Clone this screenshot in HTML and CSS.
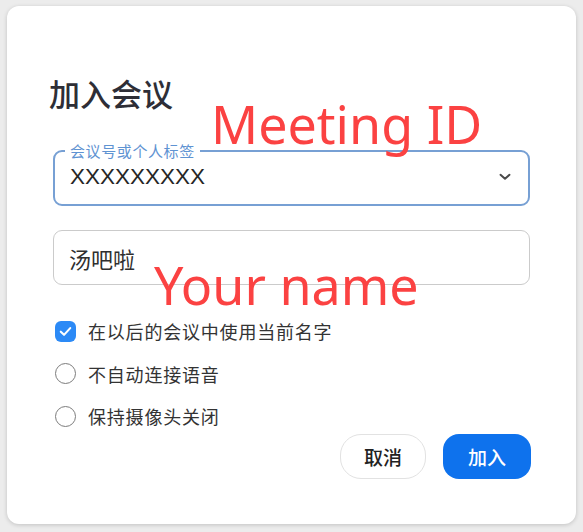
FILE: index.html
```html
<!DOCTYPE html>
<html lang="zh-CN">
<head>
<meta charset="utf-8">
<title>加入会议</title>
<link rel="stylesheet" href="styles.css">
</head>
<body>
<div class="card">
  <h1 class="title">加入会议</h1>
  <fieldset class="field field-id">
    <legend class="legend">会议号或个人标签</legend>
    <div class="field-row">
      <span class="id-value">XXXXXXXXX</span>
      <svg class="chevron" width="12" height="8" viewBox="0 0 12 8"><path d="M1.5 1.8 L6 5.8 L10.5 1.8" fill="none" stroke="#4a4a4a" stroke-width="2" stroke-linecap="round" stroke-linejoin="round"/></svg>
    </div>
  </fieldset>
  <div class="field field-name">
    <span class="name-value">汤吧啦</span>
  </div>
  <div class="options">
    <div class="option">
      <span class="box checked">
        <svg width="21" height="21" viewBox="0 0 20 20"><path d="M5.5 10.2 L8.6 13.2 L14.5 6.8" fill="none" stroke="#fff" stroke-width="2" stroke-linecap="round" stroke-linejoin="round"/></svg>
      </span>
      <span class="label">在以后的会议中使用当前名字</span>
    </div>
    <div class="option">
      <span class="box"></span>
      <span class="label">不自动连接语音</span>
    </div>
    <div class="option">
      <span class="box"></span>
      <span class="label">保持摄像头关闭</span>
    </div>
  </div>
  <div class="actions">
    <button class="btn btn-cancel">取消</button>
    <button class="btn btn-join">加入</button>
  </div>
  <span class="note note-id">Meeting ID</span>
  <span class="note note-name">Your name</span>
</div>
</body>
</html>
```
FILE: styles.css
```css
html, body {
  margin: 0;
  padding: 0;
}
body {
  background: #ececec;
  width: 583px;
  height: 532px;
  overflow: hidden;
  font-family: "Noto Sans CJK SC", "Liberation Sans", sans-serif;
}
.card {
  position: relative;
  margin: 6px 0 0 7px;
  width: 569px;
  height: 518px;
  box-sizing: border-box;
  padding: 69px 46px 0 46px;
  background: #fff;
  border-radius: 12px;
  box-shadow: 0 1px 4px rgba(0,0,0,0.18);
  display: flex;
  flex-direction: column;
}
.title {
  margin: 0;
  font-size: 31px;
  line-height: 36px;
  font-weight: 500;
  color: #2e2e36;
  margin-left: -4px;
}
.field {
  box-sizing: border-box;
  margin: 0;
  min-width: 0;
}
.field-id {
  margin-top: 32px;
  border: 2px solid #77a0d4;
  border-radius: 9px;
  padding: 0 17px 0 15px;
  height: 63px;
}
.legend {
  margin-left: -5px;
  padding: 0 5px;
  font-size: 15px;
  line-height: 16px;
  letter-spacing: 0.6px;
  color: #5f93d2;
}
.field-row {
  display: flex;
  align-items: center;
  justify-content: space-between;
  padding-top: 5px;
  height: 26px;
}
.id-value {
  font-family: "Liberation Sans", sans-serif;
  font-size: 22.5px;
  line-height: 26px;
  color: #262626;
}
.chevron {
  display: block;
}
.field-name {
  margin-top: 24px;
  height: 55px;
  border: 1.5px solid #cbcbcb;
  border-radius: 9px;
  display: flex;
  align-items: center;
  padding-left: 15px;
}
.name-value {
  font-size: 22px;
  line-height: 26px;
  color: #2f2f2f;
}
.options {
  margin-top: 25px;
  display: flex;
  flex-direction: column;
}
.option {
  height: 42.5px;
  display: flex;
  align-items: center;
  padding-left: 2px;
}
.box {
  box-sizing: border-box;
  width: 21px;
  height: 21px;
  border-radius: 50%;
  border: 1.7px solid #7c7c7c;
  flex: none;
}
.box.checked {
  border: none;
  border-radius: 6px;
  background: #2c8af6;
}
.box svg {
  display: block;
}
.label {
  margin-left: 12px;
  font-size: 18px;
  letter-spacing: 0.8px;
  color: #333;
}
.actions {
  margin-top: -3.5px;
  display: flex;
  justify-content: flex-end;
  gap: 17px;
  margin-right: -1px;
}
.btn {
  box-sizing: border-box;
  height: 45px;
  font-family: "Noto Sans CJK SC", sans-serif;
  font-size: 19px;
  font-weight: 500;
  border: none;
  padding: 0;
  cursor: pointer;
}
.btn-cancel {
  width: 86px;
  background: #fff;
  border: 1px solid #e2e2e2;
  border-radius: 21px;
  color: #222;
}
.btn-join {
  width: 88px;
  background: #0e72ed;
  border-radius: 16px;
  color: #fff;
}
.note {
  position: absolute;
  font-family: "Noto Sans", sans-serif;
  font-size: 52px;
  line-height: 60px;
  color: #fb4242;
  white-space: nowrap;
}
.note-id {
  left: 204px;
  top: 88px;
}
.note-name {
  left: 147px;
  top: 249px;
}
```
